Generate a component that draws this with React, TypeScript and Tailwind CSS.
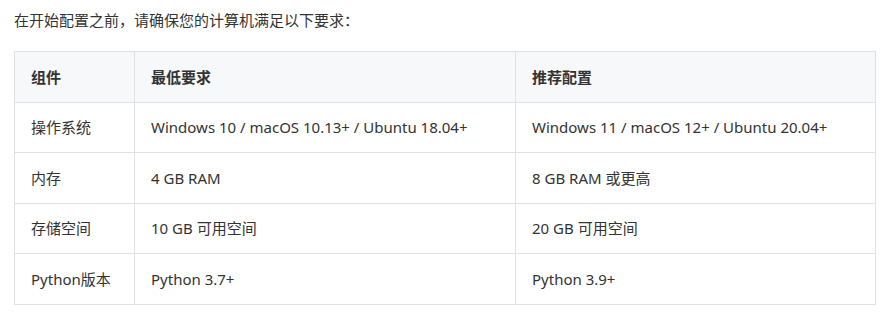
import React from 'react'

interface Row {
  name: string
  min: string
  rec: string
}

const rows: Row[] = [
  { name: '操作系统', min: 'Windows 10 / macOS 10.13+ / Ubuntu 18.04+', rec: 'Windows 11 / macOS 12+ / Ubuntu 20.04+' },
  { name: '内存', min: '4 GB RAM', rec: '8 GB RAM 或更高' },
  { name: '存储空间', min: '10 GB 可用空间', rec: '20 GB 可用空间' },
  { name: 'Python版本', min: 'Python 3.7+', rec: 'Python 3.9+' }
]

const App: React.FC = () => {
  const cell = 'border border-[#dfe2e5] px-4 h-[50.6px] text-left align-middle'
  return (
    <div
      className="w-[893px] h-[315px] bg-white text-[15px] text-[#333] pl-[14px] pt-[10px]"
      style={{ fontFamily: '"Noto Sans", "Noto Sans CJK SC", sans-serif' }}
    >
      <p className="leading-[20px] mb-[21px]">在开始配置之前，请确保您的计算机满足以下要求：</p>
      <table className="border-collapse w-[861px] table-fixed">
        <colgroup>
          <col className="w-[120px]" />
          <col className="w-[381px]" />
          <col className="w-[360px]" />
        </colgroup>
        <thead>
          <tr className="bg-[#f6f8fa]">
            <th className={`${cell} font-semibold`}>组件</th>
            <th className={`${cell} font-semibold`}>最低要求</th>
            <th className={`${cell} font-semibold`}>推荐配置</th>
          </tr>
        </thead>
        <tbody>
          {rows.map((r) => (
            <tr key={r.name}>
              <td className={cell}>{r.name}</td>
              <td className={cell}>{r.min}</td>
              <td className={cell}>{r.rec}</td>
            </tr>
          ))}
        </tbody>
      </table>
    </div>
  )
}

export default App
